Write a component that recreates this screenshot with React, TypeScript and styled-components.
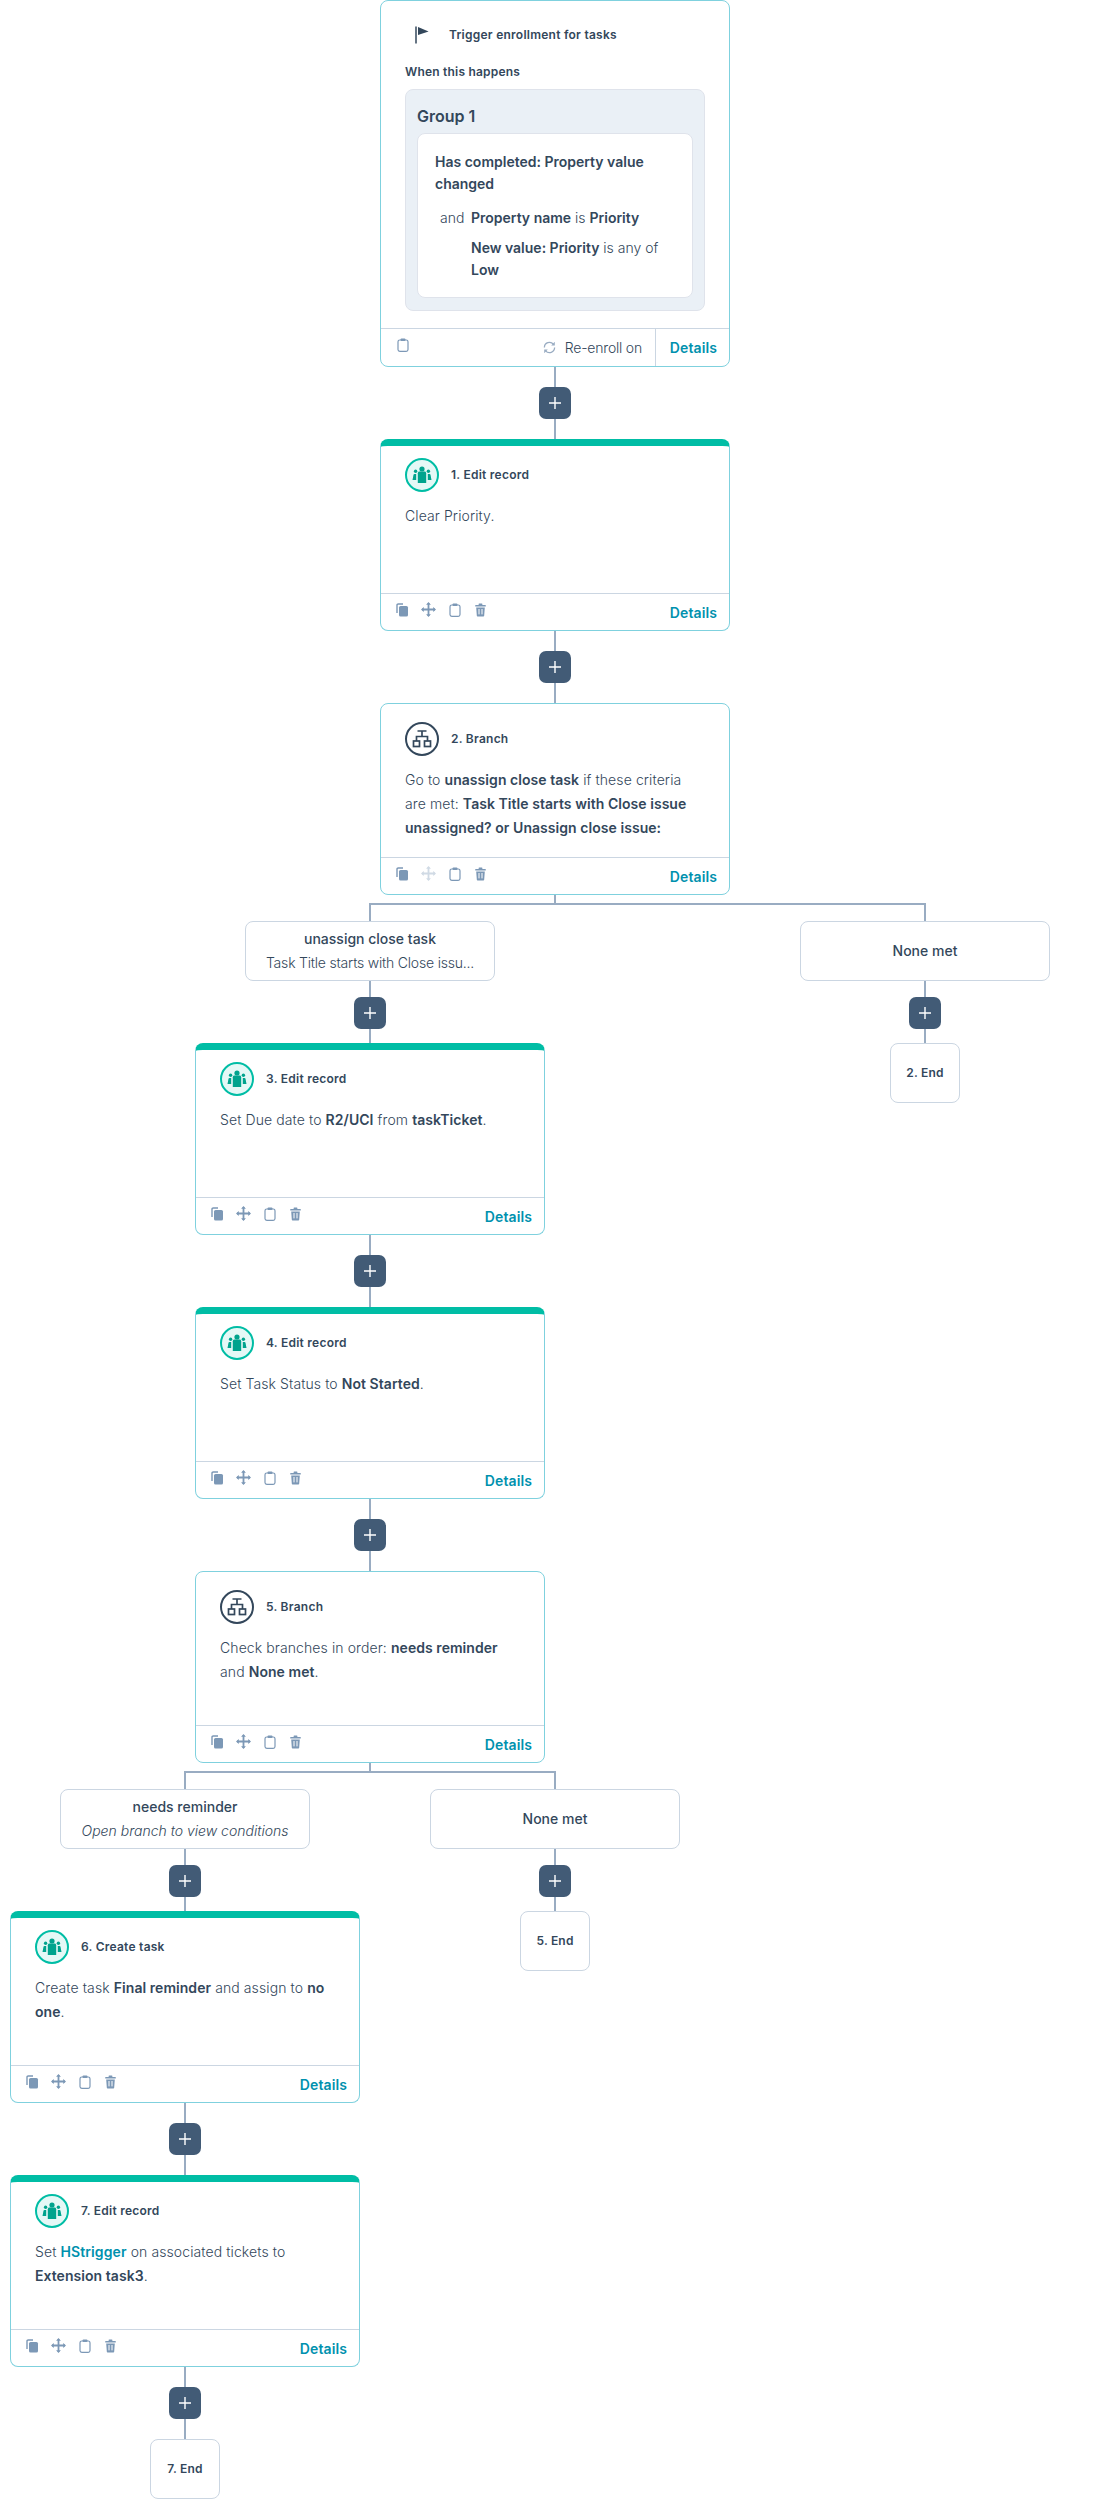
import React from "react";
import styled, { createGlobalStyle } from "styled-components";

const GlobalStyle = createGlobalStyle`
  html, body {
    margin: 0;
    padding: 0;
    background: #fff;
  }
  body {
    font-family: Inter, "Liberation Sans", sans-serif;
    color: #33475b;
  }
  * {
    box-sizing: border-box;
  }
`;

const CopyIcon = () => (
  <svg width="13" height="14" viewBox="0 0 13 14" fill="none">
    <path d="M1 10V2.2C1 1.5 1.5 1 2.2 1H7" stroke="#7c98b6" strokeWidth="1.4" />
    <rect x="3" y="3" width="9" height="10.6" rx="1.6" fill="#7c98b6" />
  </svg>
);

const MoveIcon = ({ faded }: { faded?: boolean }) => (
  <svg width="15" height="15" viewBox="0 0 15 15" fill="none" opacity={faded ? 0.35 : 1}>
    <path d="M7.5 1v13M1 7.5h13" stroke="#7c98b6" strokeWidth="1.8" />
    <path d="M7.5 0l2.4 2.8H5.1zM7.5 15l2.4-2.8H5.1zM0 7.5l2.8-2.4v4.8zM15 7.5l-2.8-2.4v4.8z" fill="#7c98b6" />
  </svg>
);

const ClipboardIcon = () => (
  <svg width="12" height="14" viewBox="0 0 12 14" fill="none">
    <rect x="1" y="2" width="10" height="11.3" rx="1.8" stroke="#7c98b6" strokeWidth="1.2" />
    <rect x="3.6" y="0.5" width="4.8" height="2.6" rx="0.8" fill="#7c98b6" />
  </svg>
);

const TrashIcon = () => (
  <svg width="11" height="14" viewBox="0 0 11 14" fill="none">
    <rect x="0.2" y="2" width="10.6" height="1.5" rx="0.5" fill="#7c98b6" />
    <rect x="3.6" y="0.4" width="3.8" height="1.8" rx="0.6" fill="#7c98b6" />
    <path d="M1.2 4.4h8.6l-.6 8.2c0 .6-.5 1-1 1H2.8c-.5 0-1-.4-1-1z" fill="#7c98b6" />
    <path d="M4 6v5.4M7 6v5.4" stroke="#fff" strokeWidth="1" />
  </svg>
);

const SyncIcon = () => (
  <svg width="13" height="13" viewBox="0 0 13 13" fill="none">
    <path d="M1.4 6.5A5.1 5.1 0 0 1 10.4 3.2" stroke="#99acc2" strokeWidth="1.3" />
    <path d="M11.6 6.5A5.1 5.1 0 0 1 2.6 9.8" stroke="#99acc2" strokeWidth="1.3" />
    <path d="M11.8 0.8v3.6H8.2zM1.2 12.2V8.6h3.6z" fill="#99acc2" />
  </svg>
);

const FlagIcon = () => (
  <svg width="14" height="18" viewBox="0 0 14 18" fill="none">
    <path d="M1 0.5v17" stroke="#33475b" strokeWidth="1.5" />
    <path d="M3 1l10.6 4.6L3 9z" fill="#33475b" />
  </svg>
);

const PeopleIcon = () => (
  <svg width="20" height="18" viewBox="0 0 20 18" fill="#00a38d">
    <circle cx="10" cy="3" r="2.6" />
    <path d="M5.8 7.2c0-1 .8-1.6 1.6-1.6h5.2c.8 0 1.6.6 1.6 1.6V17H5.8z" />
    <circle cx="3.6" cy="5.2" r="1.7" />
    <circle cx="16.4" cy="5.2" r="1.7" />
    <path d="M0.5 14l1-5.2c.1-.5.5-.9 1-.9h1.7V14zM19.5 14l-1-5.2c-.1-.5-.5-.9-1-.9h-1.7V14z" />
  </svg>
);

const BranchIcon = () => (
  <svg width="20" height="18" viewBox="0 0 20 18" fill="none" stroke="#33475b" strokeWidth="1.7">
    <path d="M5.5 1h9M10 1v5.5M4.5 11V6.5h11V11" />
    <rect x="1.5" y="11" width="6" height="5.5" />
    <rect x="12.5" y="11" width="6" height="5.5" />
  </svg>
);

const App = () => {
  return (
    <Canvas>
      <GlobalStyle />
      <Column>
        <TriggerCard />
        <StepGap />
        <ActionCard kind="record" title="1. Edit record">
          Clear Priority.
        </ActionCard>
        <StepGap />
        <ActionCard kind="branch" title="2. Branch" movable={false}>
          Go to <b>unassign close task</b> if these criteria are met:{" "}
          <b>Task Title starts with Close issue unassigned? or Unassign close issue:</b>
        </ActionCard>
        <Rail $left={370} $width={555} $stem={185} />
        <RootBranches>
          <Column $width={720}>
            <BranchLabel>
              <LabelName>unassign close task</LabelName>
              <LabelDetail $tight>Task Title starts with Close issu...</LabelDetail>
            </BranchLabel>
            <LabelGap />
            <ActionCard kind="record" title="3. Edit record">
              Set Due date to <b>R2/UCI</b> from <b>taskTicket</b>.
            </ActionCard>
            <StepGap />
            <ActionCard kind="record" title="4. Edit record">
              Set Task Status to <b>Not Started</b>.
            </ActionCard>
            <StepGap />
            <ActionCard kind="branch" title="5. Branch">
              Check branches in order: <b>needs reminder</b> and <b>None met</b>.
            </ActionCard>
            <Rail $left={175} $width={370} $stem={185} />
            <InnerBranches>
              <Column $width={350}>
                <BranchLabel>
                  <LabelName>needs reminder</LabelName>
                  <LabelDetail $italic>Open branch to view conditions</LabelDetail>
                </BranchLabel>
                <LabelGap />
                <ActionCard kind="record" title="6. Create task">
                  Create task <b>Final reminder</b> and assign to <b>no</b> <b>one</b>.
                </ActionCard>
                <StepGap />
                <ActionCard kind="record" title="7. Edit record">
                  Set <TextLink>HStrigger</TextLink> on associated tickets to{" "}
                  <b>Extension task3</b>.
                </ActionCard>
                <StepGap />
                <EndNode>7. End</EndNode>
              </Column>
              <Column $width={350}>
                <BranchLabel>
                  <LabelName>None met</LabelName>
                </BranchLabel>
                <LabelGap />
                <EndNode>5. End</EndNode>
              </Column>
            </InnerBranches>
          </Column>
          <Column $width={250}>
            <BranchLabel>
              <LabelName>None met</LabelName>
            </BranchLabel>
            <LabelGap />
            <EndNode>2. End</EndNode>
          </Column>
        </RootBranches>
      </Column>
    </Canvas>
  );
};

export default App;

const TriggerCard = () => (
  <Card $height={367}>
    <TriggerHead>
      <FlagSlot>
        <FlagIcon />
      </FlagSlot>
      <CardTitle>Trigger enrollment for tasks</CardTitle>
    </TriggerHead>
    <WhenLabel>When this happens</WhenLabel>
    <GroupBox>
      <GroupTitle>Group 1</GroupTitle>
      <FilterBox>
        <div>
          <b>Has completed: Property value changed</b>
        </div>
        <AndRow>
          <AndWord>and</AndWord>
          <div>
            <b>Property name</b> is <b>Priority</b>
          </div>
        </AndRow>
        <SubFilter>
          <b>New value: Priority</b> is any of <b>Low</b>
        </SubFilter>
      </FilterBox>
    </GroupBox>
    <TriggerFooter>
      <Tools>
        <ToolSlot>
          <ClipboardIcon />
        </ToolSlot>
      </Tools>
      <ReEnroll>
        <SyncIcon />
        Re-enroll on
      </ReEnroll>
      <TriggerDetails>Details</TriggerDetails>
    </TriggerFooter>
  </Card>
);

type ActionCardProps = {
  kind: "record" | "branch";
  title: string;
  movable?: boolean;
  children: React.ReactNode;
};

const ActionCard = ({ kind, title, movable = true, children }: ActionCardProps) => (
  <Card $height={192} $accent={kind === "record"}>
    <CardHead $accent={kind === "record"}>
      <IconCircle $kind={kind}>{kind === "record" ? <PeopleIcon /> : <BranchIcon />}</IconCircle>
      <CardTitle>{title}</CardTitle>
    </CardHead>
    <CardBody>{children}</CardBody>
    <CardFooter>
      <Tools>
        <ToolSlot>
          <CopyIcon />
        </ToolSlot>
        <ToolSlot>
          <MoveIcon faded={!movable} />
        </ToolSlot>
        <ToolSlot>
          <ClipboardIcon />
        </ToolSlot>
        <ToolSlot>
          <TrashIcon />
        </ToolSlot>
      </Tools>
      <DetailsLink>Details</DetailsLink>
    </CardFooter>
  </Card>
);

const PlusButton = () => (
  <PlusBox>
    <svg width="12" height="12" viewBox="0 0 12 12" fill="none">
      <path d="M6 0v12M0 6h12" stroke="#fff" strokeWidth="1.4" />
    </svg>
  </PlusBox>
);

// card to card: 20 + 32 + 20
const StepGap = () => (
  <>
    <Stem $h={20} />
    <PlusButton />
    <Stem $h={20} />
  </>
);

// under a branch label the gaps are a bit shorter
const LabelGap = () => (
  <>
    <Stem $h={16} />
    <PlusButton />
    <Stem $h={14} />
  </>
);

const Canvas = styled.div`
  width: 1110px;
  height: 2503px;
  overflow: hidden;
  background: #fff;
`;

const Column = styled.div<{ $width?: number }>`
  display: flex;
  flex-direction: column;
  align-items: center;
  width: ${({ $width }) => ($width ? `${$width}px` : "100%")};
`;

const RootBranches = styled.div`
  display: flex;
  gap: 70px;
  padding-left: 10px;
  width: 100%;
`;

const InnerBranches = styled.div`
  display: flex;
  gap: 20px;
  width: 100%;
`;

const Stem = styled.div<{ $h: number }>`
  width: 2px;
  height: ${({ $h }) => $h}px;
  background: #99acc2;
  flex: none;
`;

const Rail = styled.div<{ $left: number; $width: number; $stem: number }>`
  position: relative;
  align-self: flex-start;
  flex: none;
  margin-top: 8px;
  margin-left: ${({ $left }) => $left - 1}px;
  width: ${({ $width }) => $width + 2}px;
  height: 18px;
  border: 2px solid #99acc2;
  border-bottom: 0;

  &::before {
    content: "";
    position: absolute;
    top: -10px;
    left: ${({ $stem }) => $stem - 2}px;
    width: 2px;
    height: 8px;
    background: #99acc2;
  }
`;

const PlusBox = styled.div`
  width: 32px;
  height: 32px;
  flex: none;
  border-radius: 7px;
  background: #425b76;
  display: flex;
  align-items: center;
  justify-content: center;
`;

const Card = styled.div<{ $height: number; $accent?: boolean }>`
  width: 350px;
  height: ${({ $height }) => $height}px;
  flex: none;
  display: flex;
  flex-direction: column;
  background: #fff;
  border: 1px solid #7fd1de;
  border-radius: 8px;
  overflow: hidden;
  ${({ $accent }) => $accent && "border-top: 7px solid #00bda5;"}
`;

const CardHead = styled.div<{ $accent?: boolean }>`
  display: flex;
  align-items: center;
  gap: 12px;
  padding: ${({ $accent }) => ($accent ? "12px" : "18px")} 24px 0;
`;

const IconCircle = styled.div<{ $kind: "record" | "branch" }>`
  width: 34px;
  height: 34px;
  flex: none;
  border-radius: 50%;
  display: flex;
  align-items: center;
  justify-content: center;
  border: 2px solid ${({ $kind }) => ($kind === "record" ? "#00bda5" : "#33475b")};
  background: ${({ $kind }) => ($kind === "record" ? "#e5f8f6" : "#fff")};
`;

const CardTitle = styled.div`
  font-size: 12px;
  font-weight: 600;
  line-height: 18px;
  letter-spacing: 0.25px;
  color: #33475b;
`;

const CardBody = styled.div`
  flex: 1;
  padding: 12px 24px 0;
  font-size: 14px;
  font-weight: 300;
  line-height: 24px;
  letter-spacing: 0.1px;
  color: #33475b;

  b {
    font-weight: 600;
    letter-spacing: 0.05px;
  }
`;

const TextLink = styled.span`
  color: #0091ae;
  font-weight: 600;
`;

const CardFooter = styled.div`
  height: 37px;
  flex: none;
  display: flex;
  align-items: center;
  justify-content: space-between;
  padding: 0 12px 0 14px;
  border-top: 1px solid #cbd6e2;
`;

const Tools = styled.div`
  display: flex;
  align-items: center;
  gap: 11px;
  margin-top: -5px;
`;

const ToolSlot = styled.span`
  width: 15px;
  height: 15px;
  display: flex;
  align-items: center;
  justify-content: center;
`;

const DetailsLink = styled.span`
  margin-top: 1px;
  font-size: 14px;
  font-weight: 600;
  letter-spacing: 0.1px;
  color: #0091ae;
`;

const TriggerHead = styled.div`
  display: flex;
  align-items: center;
  gap: 20px;
  padding: 25px 0 0 34px;
`;

const FlagSlot = styled.span`
  width: 14px;
  height: 18px;
  display: flex;
`;

const WhenLabel = styled.div`
  margin: 19px 0 0 24px;
  font-size: 12px;
  font-weight: 600;
  line-height: 18px;
  letter-spacing: 0.2px;
`;

const GroupBox = styled.div`
  margin: 8px 24px 0;
  height: 222px;
  padding: 16px 11px 0;
  background: #eaf0f6;
  border: 1px solid #dfe3eb;
  border-radius: 8px;
`;

const GroupTitle = styled.div`
  font-size: 16px;
  font-weight: 600;
  line-height: 20px;
  margin-bottom: 7px;
`;

const FilterBox = styled.div`
  height: 165px;
  padding: 17px 17px 0;
  background: #fff;
  border: 1px solid #dfe3eb;
  border-radius: 8px;
  font-size: 14px;
  line-height: 22px;
  font-weight: 300;

  b {
    font-weight: 600;
  }
`;

const AndRow = styled.div`
  display: flex;
  margin: 12px 0 0 5px;
`;

const AndWord = styled.span`
  width: 31px;
  flex: none;
`;

const SubFilter = styled.div`
  margin: 8px 0 0 36px;
`;

const TriggerFooter = styled.div`
  margin-top: auto;
  height: 38px;
  flex: none;
  display: flex;
  align-items: stretch;
  padding-left: 14px;
  border-top: 1px solid #cbd6e2;
`;

const ReEnroll = styled.div`
  margin-left: auto;
  display: flex;
  align-items: center;
  gap: 9px;
  padding-right: 13px;
  font-size: 14px;
  font-weight: 300;
  letter-spacing: -0.2px;
`;

const TriggerDetails = styled.div`
  width: 74px;
  display: flex;
  align-items: center;
  justify-content: flex-end;
  padding-right: 12px;
  border-left: 1px solid #cbd6e2;
  font-size: 14px;
  font-weight: 600;
  letter-spacing: 0.1px;
  color: #0091ae;
`;

const BranchLabel = styled.div`
  width: 250px;
  height: 60px;
  flex: none;
  display: flex;
  flex-direction: column;
  align-items: center;
  justify-content: center;
  gap: 6px;
  background: #fff;
  border: 1px solid #cbd6e2;
  border-radius: 8px;
`;

const LabelName = styled.div`
  font-size: 14px;
  font-weight: 500;
  line-height: 18px;
`;

const LabelDetail = styled.div<{ $italic?: boolean; $tight?: boolean }>`
  font-size: 14px;
  font-weight: 300;
  line-height: 18px;
  white-space: nowrap;
  ${({ $italic }) => $italic && "font-style: italic;"}
  ${({ $tight }) => $tight && "letter-spacing: -0.2px;"}
`;

const EndNode = styled.div`
  width: 70px;
  height: 60px;
  flex: none;
  padding-top: 20px;
  text-align: center;
  font-size: 12px;
  font-weight: 600;
  line-height: 18px;
  letter-spacing: 0.2px;
  background: #fff;
  border: 1px solid #cbd6e2;
  border-radius: 8px;
`;
